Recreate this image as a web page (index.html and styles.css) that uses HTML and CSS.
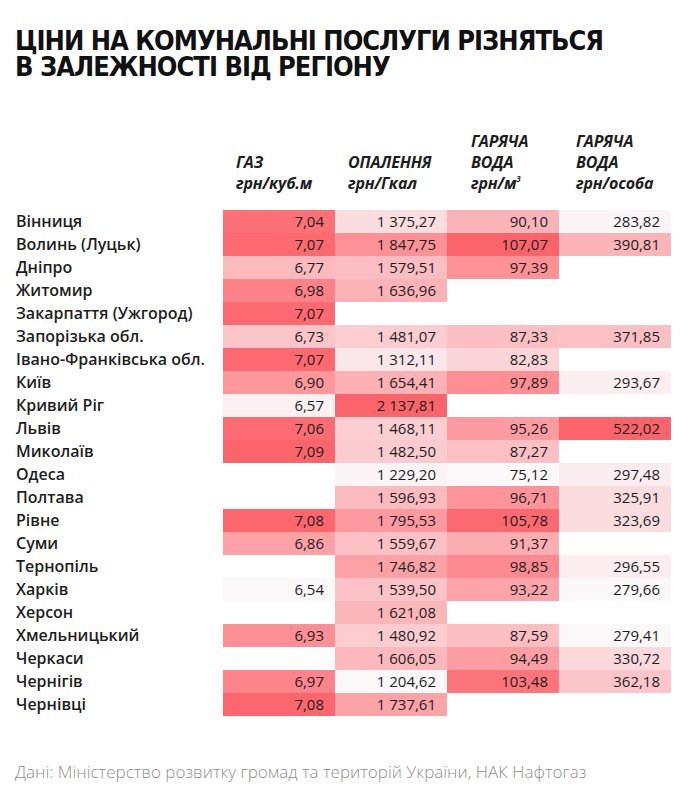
FILE: index.html
```html
<!DOCTYPE html>
<html lang="uk">
<head>
<meta charset="utf-8">
<link rel="stylesheet" href="styles.css">
</head>
<body>
<div class="page">
  <h1 class="title">ЦІНИ НА КОМУНАЛЬНІ ПОСЛУГИ РІЗНЯТЬСЯ<br>В ЗАЛЕЖНОСТІ ВІД РЕГІОНУ</h1>

  <div class="head">
    <div></div>
    <div class="h h1">ГАЗ<br>грн/куб.м</div>
    <div class="h h2">ОПАЛЕННЯ<br>грн/Гкал</div>
    <div class="h h3">ГАРЯЧА<br>ВОДА<br>грн/м<sup>3</sup></div>
    <div class="h h4">ГАРЯЧА<br>ВОДА<br>грн/особа</div>
  </div>

  <div class="table">
    <div class="name">Вінниця</div><div class="c" style="--t:90.9%">7,04</div><div class="c" style="--t:18.3%">1 375,27</div><div class="c" style="--t:46.9%">90,10</div><div class="c" style="--t:1.8%">283,82</div>
    <div class="name">Волинь (Луцьк)</div><div class="c" style="--t:96.4%">7,07</div><div class="c" style="--t:68.9%">1 847,75</div><div class="c" style="--t:100%">107,07</div><div class="c" style="--t:45.9%">390,81</div>
    <div class="name">Дніпро</div><div class="c" style="--t:41.8%">6,77</div><div class="c" style="--t:40.2%">1 579,51</div><div class="c" style="--t:69.7%">97,39</div><div class="e"></div>
    <div class="name">Житомир</div><div class="c" style="--t:80%">6,98</div><div class="c" style="--t:46.3%">1 636,96</div><div class="e"></div><div class="e"></div>
    <div class="name">Закарпаття (Ужгород)</div><div class="c" style="--t:96.4%">7,07</div><div class="e"></div><div class="e"></div><div class="e"></div>
    <div class="name">Запорізька обл.</div><div class="c" style="--t:34.5%">6,73</div><div class="c" style="--t:29.6%">1 481,07</div><div class="c" style="--t:38.2%">87,33</div><div class="c" style="--t:38.1%">371,85</div>
    <div class="name">Івано-Франківська обл.</div><div class="c" style="--t:96.4%">7,07</div><div class="c" style="--t:11.5%">1 312,11</div><div class="c" style="--t:24.1%">82,83</div><div class="e"></div>
    <div class="name">Київ</div><div class="c" style="--t:65.5%">6,90</div><div class="c" style="--t:48.2%">1 654,41</div><div class="c" style="--t:71.3%">97,89</div><div class="c" style="--t:5.9%">293,67</div>
    <div class="name">Кривий Ріг</div><div class="c" style="--t:5.5%">6,57</div><div class="c" style="--t:100%">2 137,81</div><div class="e"></div><div class="e"></div>
    <div class="name">Львів</div><div class="c" style="--t:94.5%">7,06</div><div class="c" style="--t:28.2%">1 468,11</div><div class="c" style="--t:63%">95,26</div><div class="c" style="--t:100%">522,02</div>
    <div class="name">Миколаїв</div><div class="c" style="--t:100%">7,09</div><div class="c" style="--t:29.8%">1 482,50</div><div class="c" style="--t:38%">87,27</div><div class="e"></div>
    <div class="name">Одеса</div><div class="e"></div><div class="c" style="--t:2.6%">1 229,20</div><div class="c" style="--t:0%">75,12</div><div class="c" style="--t:7.4%">297,48</div>
    <div class="name">Полтава</div><div class="e"></div><div class="c" style="--t:42%">1 596,93</div><div class="c" style="--t:67.6%">96,71</div><div class="c" style="--t:19.2%">325,91</div>
    <div class="name">Рівне</div><div class="c" style="--t:98.2%">7,08</div><div class="c" style="--t:63.3%">1 795,53</div><div class="c" style="--t:96%">105,78</div><div class="c" style="--t:18.3%">323,69</div>
    <div class="name">Суми</div><div class="c" style="--t:58.2%">6,86</div><div class="c" style="--t:38%">1 559,67</div><div class="c" style="--t:50.9%">91,37</div><div class="e"></div>
    <div class="name">Тернопіль</div><div class="e"></div><div class="c" style="--t:58.1%">1 746,82</div><div class="c" style="--t:74.3%">98,85</div><div class="c" style="--t:7.1%">296,55</div>
    <div class="name">Харків</div><div class="c" style="--t:0%">6,54</div><div class="c" style="--t:35.9%">1 539,50</div><div class="c" style="--t:56.7%">93,22</div><div class="c" style="--t:0.1%">279,66</div>
    <div class="name">Херсон</div><div class="e"></div><div class="c" style="--t:44.6%">1 621,08</div><div class="e"></div><div class="e"></div>
    <div class="name">Хмельницький</div><div class="c" style="--t:70.9%">6,93</div><div class="c" style="--t:29.6%">1 480,92</div><div class="c" style="--t:39%">87,59</div><div class="c" style="--t:0%">279,41</div>
    <div class="name">Черкаси</div><div class="e"></div><div class="c" style="--t:43%">1 606,05</div><div class="c" style="--t:60.6%">94,49</div><div class="c" style="--t:21.1%">330,72</div>
    <div class="name">Чернігів</div><div class="c" style="--t:78.2%">6,97</div><div class="c" style="--t:0%">1 204,62</div><div class="c" style="--t:88.8%">103,48</div><div class="c" style="--t:34.1%">362,18</div>
    <div class="name">Чернівці</div><div class="c" style="--t:98.2%">7,08</div><div class="c" style="--t:57.1%">1 737,61</div><div class="e"></div><div class="e"></div>
  </div>

  <p class="source">Дані: Міністерство розвитку громад та територій України, НАК Нафтогаз</p>
</div>
</body>
</html>
```

FILE: styles.css
```css
html, body {
  margin: 0;
  padding: 0;
  background: #ffffff;
}

.page {
  padding: 28px 0 0 15px;
  color: #1e1e1e;
  font-family: "Open Sans", "Noto Sans", sans-serif;
}

.title {
  margin: 0;
  font-family: "DejaVu Sans Condensed", "Roboto", sans-serif;
  font-weight: 700;
  font-size: 27px;
  line-height: 26px;
  letter-spacing: -1px;
  color: #111;
}

.head {
  display: grid;
  grid-template-columns: 208px repeat(4, 112px);
  align-items: end;
  margin-top: 51px;
}

.h {
  font-family: "Open Sans", sans-serif;
  font-weight: 700;
  font-style: italic;
  font-size: 16px;
  line-height: 21px;
  letter-spacing: -0.2px;
  color: #1e1e1e;
}

.h sup {
  font-size: 8px;
  line-height: 0;
  vertical-align: 7px;
}

.h1 { padding-left: 13px; }
.h2 { padding-left: 13px; }
.h3 { padding-left: 24px; }
.h4 { padding-left: 17px; }

.table {
  display: grid;
  grid-template-columns: 208px repeat(4, 112px);
  grid-auto-rows: 23px;
  margin-top: 16px;
}

.name {
  font-family: "Open Sans", sans-serif;
  font-weight: 600;
  font-size: 16px;
  line-height: 23px;
  color: #1e1e1e;
  white-space: nowrap;
  padding-left: 1px;
}

.c {
  text-align: right;
  padding-right: 11px;
  font-family: "Open Sans", sans-serif;
  font-size: 15px;
  line-height: 23px;
  color: #1e1e1e;
  background: color-mix(in srgb, #fc646b var(--t), #fbf8fa);
}

.source {
  margin: 44px 0 0;
  font-family: "Open Sans", sans-serif;
  font-weight: 300;
  font-size: 17px;
  color: #8f8f8f;
}
```
